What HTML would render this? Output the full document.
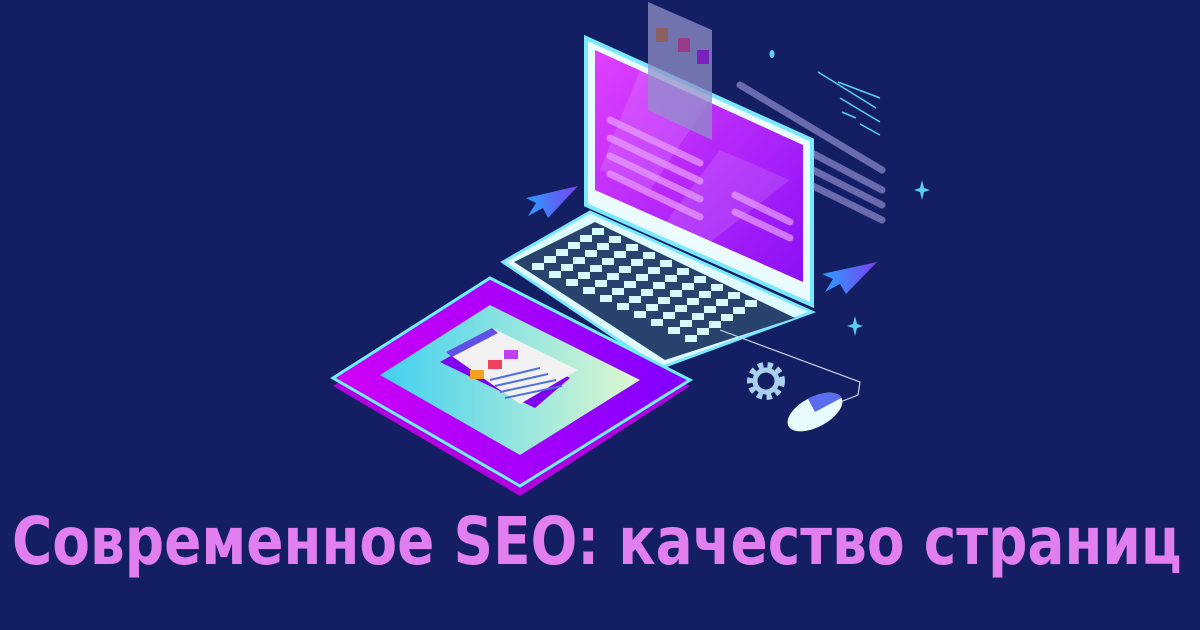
<!DOCTYPE html>
<html><head><meta charset="utf-8"><style>
html,body{margin:0;padding:0}
body{width:1200px;height:630px;background:#141f63;overflow:hidden;position:relative;font-family:"DejaVu Sans Condensed","DejaVu Sans","Liberation Sans",sans-serif}
svg{position:absolute;left:0;top:0}
.t{position:absolute;left:12px;top:503px;font-weight:bold;font-size:66px;color:#e27ff0;white-space:nowrap;transform-origin:0 0;transform:scaleX(0.925)}
</style></head><body>
<svg width="1200" height="630" viewBox="0 0 1200 630">
<defs>
<linearGradient id="scr" x1="0" y1="0" x2="1" y2="1"><stop offset="0" stop-color="#e040ff"/><stop offset="1" stop-color="#8a10f5"/></linearGradient>
<linearGradient id="tab" x1="0" y1="0" x2="1" y2="0"><stop offset="0" stop-color="#d000f5"/><stop offset="1" stop-color="#8000ff"/></linearGradient>
<linearGradient id="tin" x1="0" y1="0" x2="1" y2="0"><stop offset="0" stop-color="#40d0f0"/><stop offset="1" stop-color="#e0f8d0"/></linearGradient>
<linearGradient id="arr" x1="0" y1="0" x2="1" y2="0"><stop offset="0" stop-color="#2aa0ff"/><stop offset="1" stop-color="#7a40f0"/></linearGradient>
<g id="row"><rect x="0" y="0" width="12" height="7"/><rect x="17" y="8" width="12" height="7"/><rect x="34" y="16" width="12" height="7"/><rect x="51" y="24" width="12" height="7"/><rect x="68" y="32" width="12" height="7"/><rect x="85" y="40" width="12" height="7"/><rect x="102" y="48" width="12" height="7"/><rect x="119" y="56" width="12" height="7"/><rect x="136" y="64" width="12" height="7"/><rect x="153" y="72" width="12" height="7"/></g>
</defs>
<g stroke="#7d7fc0" stroke-width="7" stroke-linecap="round" opacity=".8">
<line x1="605" y1="96" x2="700" y2="140"/><line x1="605" y1="112" x2="700" y2="156"/><line x1="605" y1="128" x2="700" y2="172"/><line x1="605" y1="146" x2="700" y2="190"/>
<line x1="740" y1="85" x2="882" y2="170"/><line x1="740" y1="115" x2="882" y2="190"/><line x1="740" y1="133" x2="882" y2="205"/><line x1="740" y1="150" x2="882" y2="220"/>
</g>
<g stroke="#5ad0f0" stroke-width="1.5"><line x1="818" y1="72" x2="876" y2="108"/><line x1="838" y1="82" x2="880" y2="98"/><line x1="840" y1="98" x2="880" y2="122"/><line x1="842" y1="112" x2="856" y2="118"/><line x1="860" y1="124" x2="880" y2="135"/></g>
<ellipse cx="772" cy="54" rx="2.5" ry="4" fill="#5ad0f0"/>
<polygon points="586,38 812,140 812,305 586,205" fill="#eafcff" stroke="#7ae8ff" stroke-width="4"/>
<polygon points="595,50 803,145 803,282 595,190" fill="url(#scr)"/>
<polygon points="640,70 710,100 650,190 600,170" fill="#fff" opacity=".12"/>
<polygon points="720,150 790,180 700,250 660,230" fill="#fff" opacity=".12"/>
<g stroke="#e9a0ff" stroke-width="7" stroke-linecap="round" opacity=".7">
<line x1="610" y1="120" x2="700" y2="163"/><line x1="610" y1="138" x2="700" y2="181"/><line x1="610" y1="156" x2="700" y2="199"/><line x1="610" y1="174" x2="700" y2="217"/>
<line x1="735" y1="195" x2="790" y2="222"/><line x1="735" y1="212" x2="790" y2="238"/>
</g>
<polygon points="648,2 712,30 712,140 648,110" fill="#9090c8" opacity=".75"/>
<rect x="656" y="28" width="12" height="14" fill="#8b6060"/><rect x="678" y="38" width="12" height="14" fill="#9a3a8a"/><rect x="697" y="50" width="12" height="14" fill="#7a20c0"/>
<polygon points="503,262 590,212 812,312 660,368" fill="#dffbff" stroke="#7ae8ff" stroke-width="3"/>
<polygon points="514,262 595,222 795,318 665,360" fill="#28446e"/>
<g fill="#d6f8ff">
<use href="#row" x="592" y="228"/><use href="#row" x="580" y="235"/><use href="#row" x="568" y="242"/><use href="#row" x="556" y="249"/><use href="#row" x="544" y="256"/><use href="#row" x="532" y="263"/>
</g>
<polygon points="578,186 548,218 543,208 528,216 536,203 526,198" fill="url(#arr)"/>
<polygon points="877,262 846,294 840,284 825,292 833,279 822,274" fill="url(#arr)"/>
<path d="M922 180 L924 188 L930 190 L924 192 L922 200 L920 192 L914 190 L920 188Z" fill="#5ad0f0"/>
<path d="M855 316 L857 324 L863 326 L857 328 L855 336 L853 328 L847 326 L853 324Z" fill="#5ad0f0"/>
<circle cx="766" cy="381" r="15" fill="none" stroke="#a9d0ec" stroke-width="8" stroke-dasharray="5 4"/>
<circle cx="766" cy="381" r="11" fill="none" stroke="#a9d0ec" stroke-width="5"/>
<path d="M720 330 L860 382 L858 395 L830 406" stroke="#c8d8f0" fill="none" stroke-width="1.2"/>
<g transform="rotate(-28 815 412)"><ellipse cx="815" cy="412" rx="30" ry="15" fill="#e8fbff"/><path d="M815 397 A30 15 0 0 1 845 412 L815 412Z" fill="#5a6cf0"/></g>
<polygon points="333,386 490,286 690,386 520,496" fill="#b000e0"/>
<polygon points="333,378 490,278 690,380 520,486" fill="url(#tab)" stroke="#6ef0ff" stroke-width="3"/>
<polygon points="380,375 490,305 640,380 520,455" fill="url(#tin)"/>
<polygon points="440,362 490,334 570,378 535,408" fill="#8000f0"/>
<polygon points="446,352 492,328 578,370 520,404" fill="#f2f2f2"/>
<polygon points="446,352 492,328 498,333 452,357" fill="#6050e8"/>
<rect x="470" y="370" width="14" height="9" fill="#f5a020"/><rect x="488" y="360" width="14" height="9" fill="#f04060"/><rect x="504" y="350" width="14" height="9" fill="#c040f0"/>
<g stroke="#5070e0" stroke-width="2"><line x1="490" y1="380" x2="540" y2="368"/><line x1="495" y1="386" x2="548" y2="374"/><line x1="500" y1="392" x2="556" y2="380"/><line x1="505" y1="398" x2="562" y2="386"/></g>
</svg>
<div class="t">Современное SEO: качество страниц</div>
</body></html>
